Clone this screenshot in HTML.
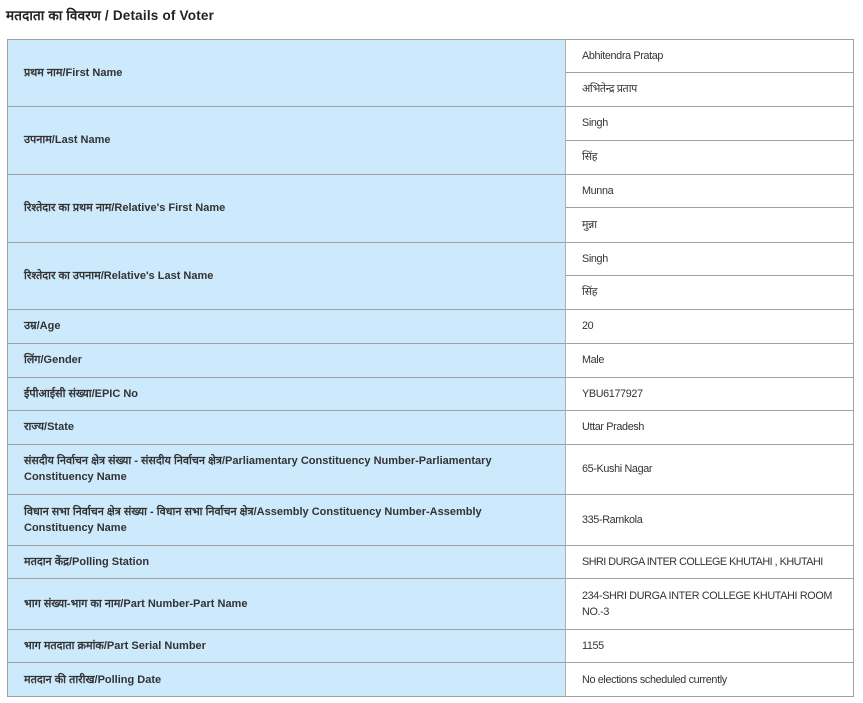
<!DOCTYPE html>
<html><head><meta charset="utf-8"><style>
body{margin:0;background:#fff;width:863px;height:703px;position:relative;font-family:"Liberation Sans","Noto Sans CJK SC",sans-serif;}
.t{position:absolute;left:6px;top:6px;font-size:13.5px;font-weight:bold;color:#222;letter-spacing:0.2px;}
.r{position:absolute;left:7px;width:847px;border-top:1px solid #a0a0a0;}
.l{position:absolute;left:7px;width:558px;background:#cde9fc;border-left:1px solid #a0a0a0;box-sizing:border-box;display:flex;align-items:center;padding-left:16px;padding-right:60px;font-size:11px;font-weight:bold;color:#333;line-height:16px;}
.v{position:absolute;left:566px;width:287px;display:flex;align-items:center;padding-left:16px;box-sizing:border-box;font-size:10.8px;letter-spacing:-0.35px;color:#333;line-height:16px;padding-right:8px;}
.vb{position:absolute;left:853px;top:39px;height:658px;border-left:1px solid #a0a0a0;}
.cb{position:absolute;left:565px;top:39px;height:658px;border-left:1px solid #b0b0b0;}
.s{position:absolute;left:566px;width:287px;border-top:1px solid #a0a0a0;}
</style></head><body>
<div class="t">मतदाता का विवरण / Details of Voter</div>
<div class="l" style="top:39px;height:67px">प्रथम नाम/First Name</div>
<div class="v" style="top:39px;height:33px">Abhitendra Pratap</div>
<div class="v" style="top:72px;height:34px">अभितेन्द्र प्रताप</div>
<div class="l" style="top:106px;height:68px">उपनाम/Last Name</div>
<div class="v" style="top:106px;height:34px">Singh</div>
<div class="v" style="top:140px;height:34px">सिंह</div>
<div class="l" style="top:174px;height:68px">रिश्तेदार का प्रथम नाम/Relative's First Name</div>
<div class="v" style="top:174px;height:33px">Munna</div>
<div class="v" style="top:207px;height:35px">मुन्ना</div>
<div class="l" style="top:242px;height:67px">रिश्तेदार का उपनाम/Relative's Last Name</div>
<div class="v" style="top:242px;height:33px">Singh</div>
<div class="v" style="top:275px;height:34px">सिंह</div>
<div class="l" style="top:309px;height:34px">उम्र/Age</div><div class="v" style="top:309px;height:34px">20</div>
<div class="l" style="top:343px;height:34px">लिंग/Gender</div><div class="v" style="top:343px;height:34px">Male</div>
<div class="l" style="top:377px;height:33px">ईपीआईसी संख्या/EPIC No</div><div class="v" style="top:377px;height:33px">YBU6177927</div>
<div class="l" style="top:410px;height:34px">राज्य/State</div><div class="v" style="top:410px;height:34px">Uttar Pradesh</div>
<div class="l" style="top:444px;height:50px">संसदीय निर्वाचन क्षेत्र संख्या - संसदीय निर्वाचन क्षेत्र/Parliamentary Constituency Number-Parliamentary Constituency Name</div><div class="v" style="top:444px;height:50px">65-Kushi Nagar</div>
<div class="l" style="top:494px;height:51px">विधान सभा निर्वाचन क्षेत्र संख्या - विधान सभा निर्वाचन क्षेत्र/Assembly Constituency Number-Assembly Constituency Name</div><div class="v" style="top:494px;height:51px">335-Ramkola</div>
<div class="l" style="top:545px;height:33px">मतदान केंद्र/Polling Station</div><div class="v" style="top:545px;height:33px;white-space:nowrap;letter-spacing:-0.5px">SHRI DURGA INTER COLLEGE KHUTAHI , KHUTAHI</div>
<div class="l" style="top:578px;height:51px">भाग संख्या-भाग का नाम/Part Number-Part Name</div><div class="v" style="top:578px;height:51px">234-SHRI DURGA INTER COLLEGE KHUTAHI ROOM NO.-3</div>
<div class="l" style="top:629px;height:33px">भाग मतदाता क्रमांक/Part Serial Number</div><div class="v" style="top:629px;height:33px">1155</div>
<div class="l" style="top:662px;height:35px">मतदान की तारीख/Polling Date</div><div class="v" style="top:662px;height:35px">No elections scheduled currently</div>
<div class="r" style="top:39px"></div><div class="s" style="top:72px"></div>
<div class="r" style="top:106px"></div><div class="s" style="top:140px"></div>
<div class="r" style="top:174px"></div><div class="s" style="top:207px"></div>
<div class="r" style="top:242px"></div><div class="s" style="top:275px"></div>
<div class="r" style="top:309px"></div><div class="r" style="top:343px"></div><div class="r" style="top:377px"></div>
<div class="r" style="top:410px"></div><div class="r" style="top:444px"></div><div class="r" style="top:494px"></div>
<div class="r" style="top:545px"></div><div class="r" style="top:578px"></div><div class="r" style="top:629px"></div>
<div class="r" style="top:662px"></div><div class="r" style="top:696px"></div>
<div class="vb"></div><div class="cb"></div>
</body></html>
